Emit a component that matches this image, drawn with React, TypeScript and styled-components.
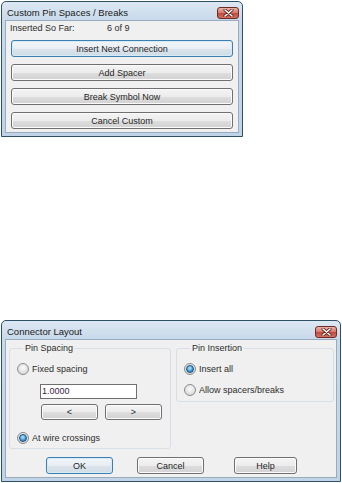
import styled, { createGlobalStyle } from "styled-components";

const GlobalStyle = createGlobalStyle`
  body {
    margin: 0;
    background: #ffffff;
    font-family: "Liberation Sans", Arial, sans-serif;
  }
`;

const Page = styled.div`
  padding: 1px 0 0 1px;
  display: flex;
  flex-direction: column;
  align-items: flex-start;
`;

const Window = styled.div<{ $w: number; $h: number; $top?: number }>`
  width: ${p => p.$w}px;
  height: ${p => p.$h}px;
  margin-top: ${p => p.$top || 0}px;
  box-sizing: border-box;
  border: 1px solid #2f5166;
  border-radius: 5px 5px 0 0;
  background: linear-gradient(#dde8f3, #c8d9ea 18px, #c1d3e6);
  display: flex;
  flex-direction: column;
`;

const TitleBar = styled.div`
  height: 18px;
  flex-shrink: 0;
  display: flex;
  align-items: center;
  justify-content: space-between;
  padding: 0 3px 0 5px;
`;

const Title = styled.span`
  font-size: 9.5px;
  color: #1a1a1a;
  padding-top: 2px;
`;

const CloseButton = styled.div`
  width: 22px;
  height: 12px;
  box-sizing: border-box;
  margin-top: 3px;
  border: 1px solid #6e2b25;
  border-radius: 3px;
  background: linear-gradient(#eab2a9, #d67c70 45%, #c24c40 55%, #d2705f);
  display: flex;
  align-items: center;
  justify-content: center;
`;

const Client = styled.div`
  flex: 1;
  margin: 0 3px 3px;
  border: 1px solid #98abbf;
  background: #f0f0f0;
  display: flex;
  flex-direction: column;
`;

const InfoRow = styled.div`
  height: 14px;
  display: flex;
  align-items: center;
  padding-left: 4px;
  font-size: 9px;
  color: #2c2c2c;
`;

const InfoLabel = styled.span`
  width: 97px;
`;

const ButtonStack = styled.div`
  display: flex;
  flex-direction: column;
  gap: 7px;
  padding: 5px 5px 0;
`;

const Button = styled.button<{ $default?: boolean; $w?: number; $h?: number }>`
  width: ${p => (p.$w ? `${p.$w}px` : "auto")};
  height: ${p => p.$h || 17}px;
  box-sizing: border-box;
  padding: 0;
  border: 1px solid ${p => (p.$default ? "#3c7fb1" : "#707070")};
  border-radius: 3px;
  background: ${p =>
    p.$default
      ? "linear-gradient(#f1f5f8, #e8eef3 50%, #dbe4eb 51%, #d1dce5)"
      : "linear-gradient(#f4f4f4, #ececec 50%, #dedede 51%, #d2d2d2)"};
  box-shadow: inset 0 0 0 1px ${p => (p.$default ? "#d6ebf8" : "#fbfbfb")};
  font-family: "Liberation Sans", Arial, sans-serif;
  font-size: 9px;
  color: #262626;
`;

const GroupRow = styled.div`
  display: flex;
  gap: 5px;
  padding: 2px 0 0 3px;
  align-items: flex-start;
`;

const Group = styled.fieldset<{ $w: number; $h: number }>`
  width: ${p => p.$w}px;
  height: ${p => p.$h}px;
  box-sizing: border-box;
  margin: 0;
  padding: 8px 7px 0;
  border: 1px solid #d5dfe5;
  border-radius: 3px;
  display: flex;
  flex-direction: column;
  align-items: flex-start;
`;

const Legend = styled.legend`
  margin-left: 6px;
  padding: 0 2px;
  font-size: 9px;
  line-height: 12px;
  color: #2c2c2c;
`;

const RadioRow = styled.label<{ $gap?: number }>`
  height: 14px;
  margin-top: ${p => p.$gap || 0}px;
  display: flex;
  align-items: center;
  gap: 3px;
  font-size: 9px;
  color: #2c2c2c;
`;

const RadioCircle = styled.span<{ $on?: boolean }>`
  width: 12px;
  height: 12px;
  box-sizing: border-box;
  border-radius: 50%;
  border: 1px solid #8a8c8e;
  background: radial-gradient(circle at 50% 40%, #fbfbfb, #dcdcdc 70%, #c9c9c9);
  display: flex;
  align-items: center;
  justify-content: center;
  &::after {
    content: "";
    display: ${p => (p.$on ? "block" : "none")};
    width: 6px;
    height: 6px;
    border-radius: 50%;
    border: 1px solid #1c5180;
    background: radial-gradient(circle at 45% 35%, #bfe6fb, #3f9ad6 60%, #1a5f95);
  }
`;

const NumberInput = styled.div`
  width: 97px;
  height: 15px;
  box-sizing: border-box;
  margin: 8px 0 0 23px;
  border: 1px solid #6f6f6f;
  background: #ffffff;
  padding-left: 1px;
  font-size: 9px;
  line-height: 13px;
  color: #3b1f47;
`;

const StepRow = styled.div`
  display: flex;
  gap: 7px;
  margin: 5px 0 0 24px;
`;

const FooterRow = styled.div`
  display: flex;
  padding: 8px 0 0 40px;
`;

const FooterButton = styled(Button)<{ $left?: number }>`
  margin-left: ${p => p.$left || 0}px;
`;

function CloseIcon() {
  return (
    <svg width="11" height="8" viewBox="0 0 11 8">
      <path d="M2 1 L9 7 M9 1 L2 7" stroke="#5a1d18" strokeWidth="3" strokeLinecap="round" />
      <path d="M2 1 L9 7 M9 1 L2 7" stroke="#ffffff" strokeWidth="1.6" strokeLinecap="round" />
    </svg>
  );
}

function Radio({ label, on, gap }: { label: string; on?: boolean; gap?: number }) {
  return (
    <RadioRow $gap={gap}>
      <RadioCircle $on={on} />
      {label}
    </RadioRow>
  );
}

export default function App() {
  return (
    <Page>
      <GlobalStyle />
      <Window $w={242} $h={136}>
        <TitleBar>
          <Title>Custom Pin Spaces / Breaks</Title>
          <CloseButton>
            <CloseIcon />
          </CloseButton>
        </TitleBar>
        <Client>
          <InfoRow>
            <InfoLabel>Inserted So Far:</InfoLabel>
            <span>6 of 9</span>
          </InfoRow>
          <ButtonStack>
            <Button $default>Insert Next Connection</Button>
            <Button>Add Spacer</Button>
            <Button>Break Symbol Now</Button>
            <Button>Cancel Custom</Button>
          </ButtonStack>
        </Client>
      </Window>

      <Window $w={340} $h={162} $top={183}>
        <TitleBar>
          <Title>Connector Layout</Title>
          <CloseButton>
            <CloseIcon />
          </CloseButton>
        </TitleBar>
        <Client>
          <GroupRow>
            <Group $w={162} $h={107}>
              <Legend>Pin Spacing</Legend>
              <Radio label="Fixed spacing" />
              <NumberInput>1.0000</NumberInput>
              <StepRow>
                <Button $w={57} $h={16}>&lt;</Button>
                <Button $w={57} $h={16}>&gt;</Button>
              </StepRow>
              <Radio label="At wire crossings" on gap={11} />
            </Group>
            <Group $w={158} $h={60}>
              <Legend>Pin Insertion</Legend>
              <Radio label="Insert all" on />
              <Radio label="Allow spacers/breaks" gap={7} />
            </Group>
          </GroupRow>
          <FooterRow>
            <FooterButton $default $w={67}>OK</FooterButton>
            <FooterButton $w={67} $left={24}>Cancel</FooterButton>
            <FooterButton $w={63} $left={30}>Help</FooterButton>
          </FooterRow>
        </Client>
      </Window>
    </Page>
  );
}
